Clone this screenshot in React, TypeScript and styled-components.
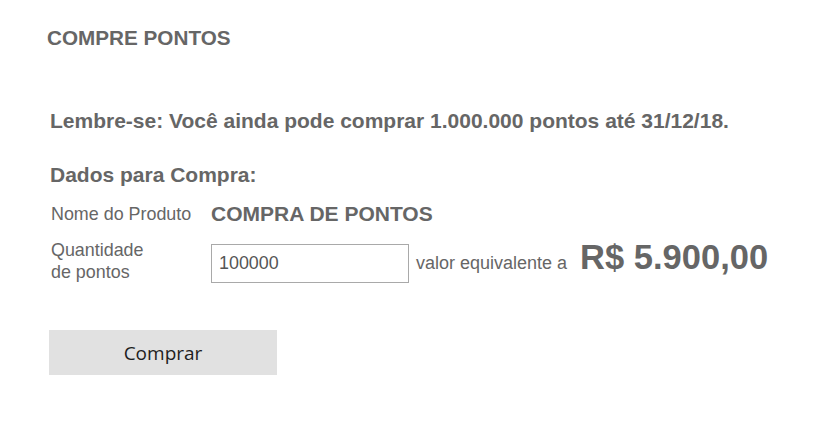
import React from 'react';
import styled, {createGlobalStyle} from 'styled-components';

const GlobalStyle = createGlobalStyle`
    body {
        margin: 0;
        background: #ffffff;
        font-family: "Liberation Sans", Arial, sans-serif;
        color: #666666;
    }
`;

const Page = styled.div`
    padding: 25px 0 0 47px;
`;

const Title = styled.h2`
    margin: 0;
    font-size: 20.7px;
    font-weight: bold;
    line-height: 26px;
    color: #666666;
`;

const Section = styled.div`
    padding: 57px 0 0 3px;
`;

const Notice = styled.p`
    margin: 0;
    font-size: 21px;
    font-weight: bold;
    line-height: 26px;
`;

const Subtitle = styled.h3`
    margin: 28px 0 0;
    font-size: 21px;
    font-weight: bold;
    line-height: 26px;
`;

const Form = styled.div`
    display: grid;
    grid-template-columns: 161px auto;
    row-gap: 11px;
    margin-top: 13px;
    align-items: center;
`;

const Label = styled.label`
    font-size: 17.9px;
    line-height: 22px;
    padding-left: 1px;
`;

const ProductName = styled.span`
    font-size: 21px;
    font-weight: bold;
    line-height: 26px;
`;

const AmountRow = styled.div`
    display: flex;
    align-items: baseline;
`;

const AmountInput = styled.input`
    box-sizing: border-box;
    width: 198px;
    height: 39px;
    border: 1px solid #a9a9a9;
    padding: 0 7px;
    font-family: "Liberation Sans", Arial, sans-serif;
    font-size: 17.9px;
    color: #555555;
    outline: none;
`;

const Hint = styled.span`
    margin-left: 7px;
    font-size: 18px;
`;

const Price = styled.span`
    margin-left: 13px;
    font-size: 34.5px;
    font-weight: bold;
`;

const BuyButton = styled.button`
    display: block;
    margin: 47px 0 0 2px;
    width: 228px;
    height: 45px;
    border: none;
    background: #e1e1e1;
    color: #1e1e1e;
    font-family: "Open Sans", sans-serif;
    font-size: 19px;
    cursor: pointer;
`;

export default function App() {
    return (
        <Page>
            <GlobalStyle/>
            <Title>COMPRE PONTOS</Title>
            <Section>
                <Notice>Lembre-se: Você ainda pode comprar 1.000.000 pontos até 31/12/18.</Notice>
                <Subtitle>Dados para Compra:</Subtitle>
                <Form>
                    <Label>Nome do Produto</Label>
                    <ProductName>COMPRA DE PONTOS</ProductName>
                    <Label htmlFor="qtd">Quantidade<br/>de pontos</Label>
                    <AmountRow>
                        <AmountInput id="qtd" defaultValue="100000"/>
                        <Hint>valor equivalente a</Hint>
                        <Price>R$ 5.900,00</Price>
                    </AmountRow>
                </Form>
            </Section>
            <BuyButton>Comprar</BuyButton>
        </Page>
    );
}
